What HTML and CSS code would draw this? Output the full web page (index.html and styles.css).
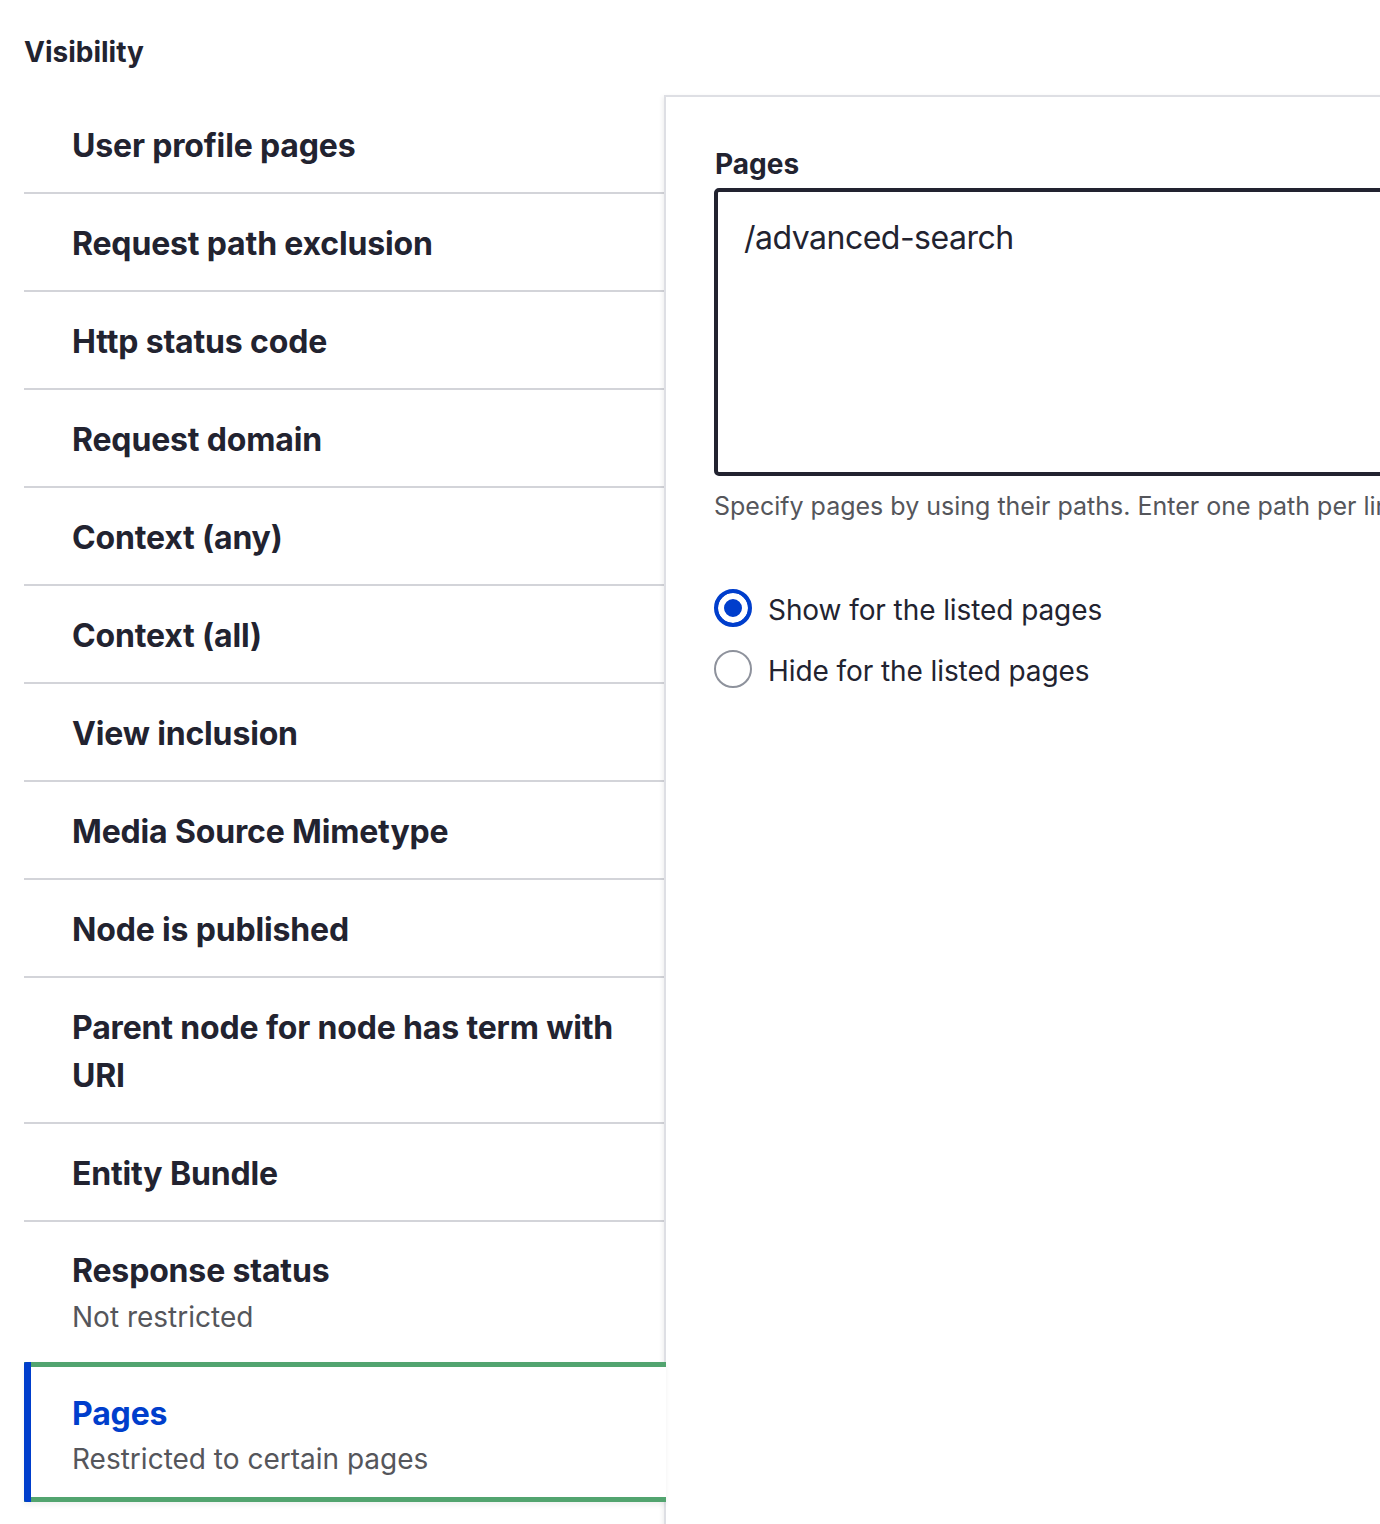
FILE: index.html
```html
<!DOCTYPE html>
<html lang="en">
<head>
<meta charset="utf-8">
<title>Visibility</title>
<link rel="stylesheet" href="styles.css">
</head>
<body>
<div class="page">
  <h2 class="section-title">Visibility</h2>
  <div class="vtabs">
    <ul class="vtabs-menu">
      <li class="vtabs-item"><a class="vtabs-link" href="#"><strong class="vtabs-title">User profile pages</strong></a></li>
      <li class="vtabs-item"><a class="vtabs-link" href="#"><strong class="vtabs-title">Request path exclusion</strong></a></li>
      <li class="vtabs-item"><a class="vtabs-link" href="#"><strong class="vtabs-title">Http status code</strong></a></li>
      <li class="vtabs-item"><a class="vtabs-link" href="#"><strong class="vtabs-title">Request domain</strong></a></li>
      <li class="vtabs-item"><a class="vtabs-link" href="#"><strong class="vtabs-title">Context (any)</strong></a></li>
      <li class="vtabs-item"><a class="vtabs-link" href="#"><strong class="vtabs-title">Context (all)</strong></a></li>
      <li class="vtabs-item"><a class="vtabs-link" href="#"><strong class="vtabs-title">View inclusion</strong></a></li>
      <li class="vtabs-item"><a class="vtabs-link" href="#"><strong class="vtabs-title">Media Source Mimetype</strong></a></li>
      <li class="vtabs-item"><a class="vtabs-link" href="#"><strong class="vtabs-title">Node is published</strong></a></li>
      <li class="vtabs-item"><a class="vtabs-link" href="#"><strong class="vtabs-title">Parent node for node has term with URI</strong></a></li>
      <li class="vtabs-item"><a class="vtabs-link" href="#"><strong class="vtabs-title">Entity Bundle</strong></a></li>
      <li class="vtabs-item is-before-selected"><a class="vtabs-link" href="#"><strong class="vtabs-title">Response status</strong><span class="vtabs-summary">Not restricted</span></a></li>
      <li class="vtabs-item is-selected"><a class="vtabs-link" href="#"><strong class="vtabs-title">Pages</strong><span class="vtabs-summary">Restricted to certain pages</span></a></li>
    </ul>
    <div class="vtabs-pane">
      <div class="form-item">
        <label class="form-label" for="pages">Pages</label>
        <textarea class="form-textarea" id="pages">/advanced-search</textarea>
        <div class="form-description">Specify pages by using their paths. Enter one path per line. The '*' character is a wildcard. An example path is /user/* for every user page. &lt;front&gt; is the front page.</div>
      </div>
      <div class="radios">
        <label class="radio-row"><input class="radio" type="radio" name="vis" checked><span class="radio-label">Show for the listed pages</span></label>
        <label class="radio-row"><input class="radio" type="radio" name="vis"><span class="radio-label">Hide for the listed pages</span></label>
      </div>
    </div>
  </div>
</div>
</body>
</html>
```

FILE: styles.css
```css
html, body {
  margin: 0;
  padding: 0;
  overflow: hidden;
  background: #fff;
}

body {
  font-family: Inter, "Noto Sans", "Liberation Sans", sans-serif;
  color: #222330;
}

.page {
  width: 1900px;
  padding: 34px 0 0 24px;
}

.section-title {
  margin: 0 0 26px;
  font-size: 28px;
  line-height: 36px;
  font-weight: 700;
}

.vtabs {
  display: flex;
  align-items: stretch;
}

.vtabs-menu {
  list-style: none;
  margin: 0;
  padding: 0;
  width: 640px;
  flex: 0 0 640px;
}

.vtabs-item {
  border-bottom: 2px solid #d3d4d9;
  background: #fff;
}

.vtabs-item.is-before-selected {
  border-bottom: 0;
}

.vtabs-link {
  display: flex;
  flex-direction: column;
  padding: 26px 24px 22px 48px;
  color: #222330;
  text-decoration: none;
}

.vtabs-title {
  font-size: 32px;
  line-height: 48px;
  font-weight: 700;
  letter-spacing: -0.005em;
}

.vtabs-summary {
  font-size: 28px;
  line-height: 44px;
  color: #55565b;
}

.vtabs-item.is-before-selected .vtabs-link {
  padding-top: 25px;
  padding-bottom: 23px;
}

.vtabs-item.is-selected {
  position: relative;
  z-index: 2;
  margin-right: -2px;
  border-top: 5px solid #52a46f;
  border-bottom: 5px solid #52a46f;
  box-shadow: 0 3px 5px rgba(0, 0, 0, 0.06);
}

.vtabs-item.is-selected::before {
  content: "";
  position: absolute;
  left: 0;
  top: -5px;
  bottom: -5px;
  width: 7px;
  background: #003ecc;
  border-radius: 2px 0 0 2px;
}

.vtabs-item.is-selected .vtabs-link {
  padding-top: 23px;
  padding-bottom: 16px;
}

.vtabs-item.is-selected .vtabs-title {
  color: #003ecc;
}

.vtabs-item.is-selected .vtabs-summary {
  margin-top: -1px;
}

.vtabs-pane {
  flex: 1;
  border-top: 2px solid #dedfe4;
  border-left: 2px solid #dedfe4;
  margin-top: -1px;
  padding: 49px 0 60px 48px;
  box-shadow: -3px 0 5px -2px rgba(0, 0, 0, 0.08);
  background: #fff;
  min-height: 1440px;
}

.form-item {
  display: flex;
  flex-direction: column;
}

.form-label {
  font-size: 28px;
  line-height: 36px;
  font-weight: 700;
  margin-bottom: 6px;
  padding-left: 1px;
}

.form-textarea {
  box-sizing: border-box;
  width: 1100px;
  height: 288px;
  border: 4px solid #222330;
  border-radius: 5px;
  padding: 22px 26px 26px;
  font-family: inherit;
  font-size: 32px;
  line-height: 48px;
  color: #222330;
  resize: none;
  outline: none;
  letter-spacing: -0.016em;
}

.form-description {
  margin-top: 12px;
  font-size: 25px;
  line-height: 36px;
  color: #55565b;
  white-space: nowrap;
}

.radios {
  margin-top: 63px;
  display: flex;
  flex-direction: column;
  gap: 19px;
}

.radio-row {
  display: flex;
  align-items: center;
  gap: 16px;
  height: 42px;
}

.radio {
  appearance: none;
  -webkit-appearance: none;
  margin: 0;
  box-sizing: border-box;
  width: 38px;
  height: 38px;
  border-radius: 50%;
  border: 2px solid #8e929c;
  background: #fff;
}

.radio:checked {
  border: 4px solid #003ecc;
  background: #003ecc;
  box-shadow: inset 0 0 0 6px #fff;
}

.radio-label {
  font-size: 28px;
  line-height: 42px;
  color: #222330;
  letter-spacing: -0.003em;
  padding-top: 4px;
}
```
